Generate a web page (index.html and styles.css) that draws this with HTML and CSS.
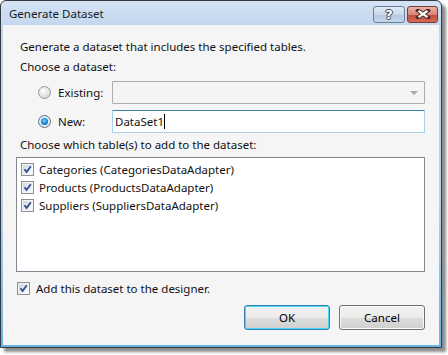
FILE: index.html
```html
<!DOCTYPE html>
<html lang="en">
<head>
<meta charset="utf-8">
<title>Generate Dataset</title>
<link rel="stylesheet" href="styles.css">
</head>
<body>
<div class="window">
  <div class="titlebar">
    <span class="title">Generate Dataset</span>
    <div class="caption-buttons">
      <button class="cap help" type="button"><span class="q">?</span></button>
      <button class="cap close" type="button">
        <svg width="16" height="10" viewBox="0 0 16 10"><path d="M3 1.5 L13 8.5 M13 1.5 L3 8.5" stroke="#4a2a28" stroke-width="4" stroke-linecap="square"/><path d="M3.5 1.8 L12.5 8.2 M12.5 1.8 L3.5 8.2" stroke="#fff" stroke-width="2.2"/></svg>
      </button>
    </div>
  </div>
  <div class="client">
    <p class="text intro">Generate a dataset that includes the specified tables.</p>
    <p class="text section">Choose a dataset:</p>
    <div class="choices">
      <div class="choice">
        <span class="radio"></span>
        <span class="choice-label">Existing:</span>
        <div class="combo"><span class="combo-arrow"></span></div>
      </div>
      <div class="choice">
        <span class="radio checked"></span>
        <span class="choice-label">New:</span>
        <div class="textbox">DataSet1<span class="caret"></span></div>
      </div>
    </div>
    <p class="text section">Choose which table(s) to add to the dataset:</p>
    <div class="listbox">
      <div class="item"><span class="check"></span>Categories (CategoriesDataAdapter)</div>
      <div class="item"><span class="check"></span>Products (ProductsDataAdapter)</div>
      <div class="item"><span class="check"></span>Suppliers (SuppliersDataAdapter)</div>
    </div>
    <div class="add-row"><span class="check"></span>Add this dataset to the designer.</div>
    <div class="buttons">
      <button class="btn default" type="button">OK</button>
      <button class="btn" type="button">Cancel</button>
    </div>
  </div>
</div>
</body>
</html>
```

FILE: styles.css
```css
* { box-sizing: border-box; }
html, body { margin: 0; padding: 0; background: #fff; }
body {
  font-family: "Segoe UI", "Noto Sans", "Open Sans", sans-serif;
  font-size: 11.5px;
  color: #111;
  width: 448px;
  height: 355px;
  overflow: hidden;
}
.window {
  width: 442px;
  height: 348px;
  border: 1px solid #343a40;
  border-radius: 6px 6px 0 0;
  background: linear-gradient(#d5e3f4 0px, #c3d7ef 24px, #b7d0ec 200px, #68b4e2 348px);
  box-shadow: 4px 4px 3px rgba(0,0,0,0.45);
  display: flex;
  flex-direction: column;
  padding: 0 2px 2px 2px;
}
.titlebar {
  height: 24px;
  display: flex;
  align-items: center;
  justify-content: space-between;
  padding-left: 6px;
}
.title { font-size: 11.5px; color: #1a1a1a; }
.caption-buttons { display: flex; gap: 2px; margin-top: 2px; margin-right: 1px; }
.cap {
  height: 17px;
  border-radius: 3px;
  padding: 0;
  display: flex;
  align-items: center;
  justify-content: center;
}
.help {
  width: 32px;
  border: 1px solid #6d7f96;
  background: linear-gradient(#e2ebf6 0%, #c9d8ea 50%, #b4c7df 51%, #c7d7ea 100%);
}
.help .q {
  font-family: "DejaVu Sans", sans-serif;
  font-weight: bold;
  font-size: 13px;
  line-height: 13px;
  color: #fff;
  text-shadow: 0 0 1px #39495e, 1px 0 0 #39495e, -1px 0 0 #39495e, 0 1px 0 #39495e, 0 -1px 0 #39495e;
}
.close {
  width: 31px;
  border: 1px solid #7d3931;
  background: linear-gradient(#eab1a5 0%, #d88576 50%, #c5493a 51%, #d16c58 100%);
}
.client {
  flex: 1;
  background: #f5f5f5;
  padding: 14px 13px 0 13px;
  display: flex;
  flex-direction: column;
}
.text { margin: 0 0 0 4px; line-height: 16px; }
.section { margin-top: 4px; }
.choices {
  display: flex;
  flex-direction: column;
  gap: 6px;
  margin-top: 6px;
}
.choice {
  display: flex;
  align-items: center;
  height: 23px;
}
.radio {
  width: 13px;
  height: 13px;
  border-radius: 50%;
  border: 1px solid #9a9a9a;
  background: radial-gradient(circle at 40% 35%, #ffffff 0%, #e6e6e6 45%, #cfcfcf 100%);
  margin-left: 22px;
  position: relative;
  flex: none;
}
.radio.checked {
  border-color: #5c6f85;
  background: radial-gradient(circle at 50% 50%, #e8f1fa 0%, #dfe8f2 100%);
}
.radio.checked::after {
  content: "";
  position: absolute;
  left: 2px; top: 2px;
  width: 7px; height: 7px;
  border-radius: 50%;
  background: radial-gradient(circle at 45% 40%, #8fe0ff 0%, #2f9ce0 35%, #0b4f8f 100%);
}
.choice-label { width: 54px; margin-left: 7px; flex: none; }
.combo {
  width: 313px;
  height: 23px;
  border: 1px solid #acacac;
  border-radius: 1px;
  background: #f4f4f4;
  position: relative;
}
.combo-arrow {
  position: absolute;
  right: 6px;
  top: 9px;
  border-left: 4px solid transparent;
  border-right: 4px solid transparent;
  border-top: 4px solid #a9a9a9;
}
.textbox {
  width: 313px;
  height: 23px;
  border: 1px solid #a5d3ec;
  border-top-color: #3c7fb1;
  border-radius: 1px;
  background: #fff;
  padding-left: 2px;
  line-height: 21px;
  display: flex;
  align-items: center;
}
.caret {
  display: inline-block;
  width: 1px;
  height: 15px;
  background: #000;
}
.listbox {
  margin-top: 4px;
  width: 409px;
  height: 115px;
  border: 1px solid #828790;
  background: #fff;
  padding: 2px 0 0 4px;
}
.item {
  height: 18px;
  display: flex;
  align-items: center;
}
.check {
  width: 13px;
  height: 13px;
  border: 1px solid #8e8f8f;
  background:
    url("data:image/svg+xml;utf8,<svg xmlns='http://www.w3.org/2000/svg' width='11' height='11'><path d='M2.5 5.2 L4.6 8 L8.8 2.2' fill='none' stroke='%23304f94' stroke-width='1.9'/></svg>") center/11px 11px no-repeat,
    linear-gradient(135deg, #c9ced8 0%, #eef0f4 60%, #ffffff 100%);
  box-shadow: inset 0 0 0 1px #f4f4f4;
  margin-right: 5px;
  flex: none;
}
.add-row {
  display: flex;
  align-items: center;
  height: 16px;
  margin-top: 8px;
  margin-left: 1px;
}
.add-row .check { margin-right: 6px; }
.buttons {
  display: flex;
  justify-content: flex-end;
  gap: 9px;
  margin-top: 9px;
  padding-right: 1px;
}
.btn {
  width: 86px;
  height: 25px;
  border: 1px solid #707070;
  border-radius: 3px;
  background: linear-gradient(#f2f2f2 0%, #ebebeb 50%, #dddddd 51%, #cfcfcf 100%);
  font-family: inherit;
  font-size: 11.5px;
  color: #000;
  padding: 0;
  box-shadow: inset 0 0 0 1px #fbfbfb;
}
.btn.default {
  border-color: #3c7fb1;
  box-shadow: inset 0 0 0 1px #48d7f9;
}
```
